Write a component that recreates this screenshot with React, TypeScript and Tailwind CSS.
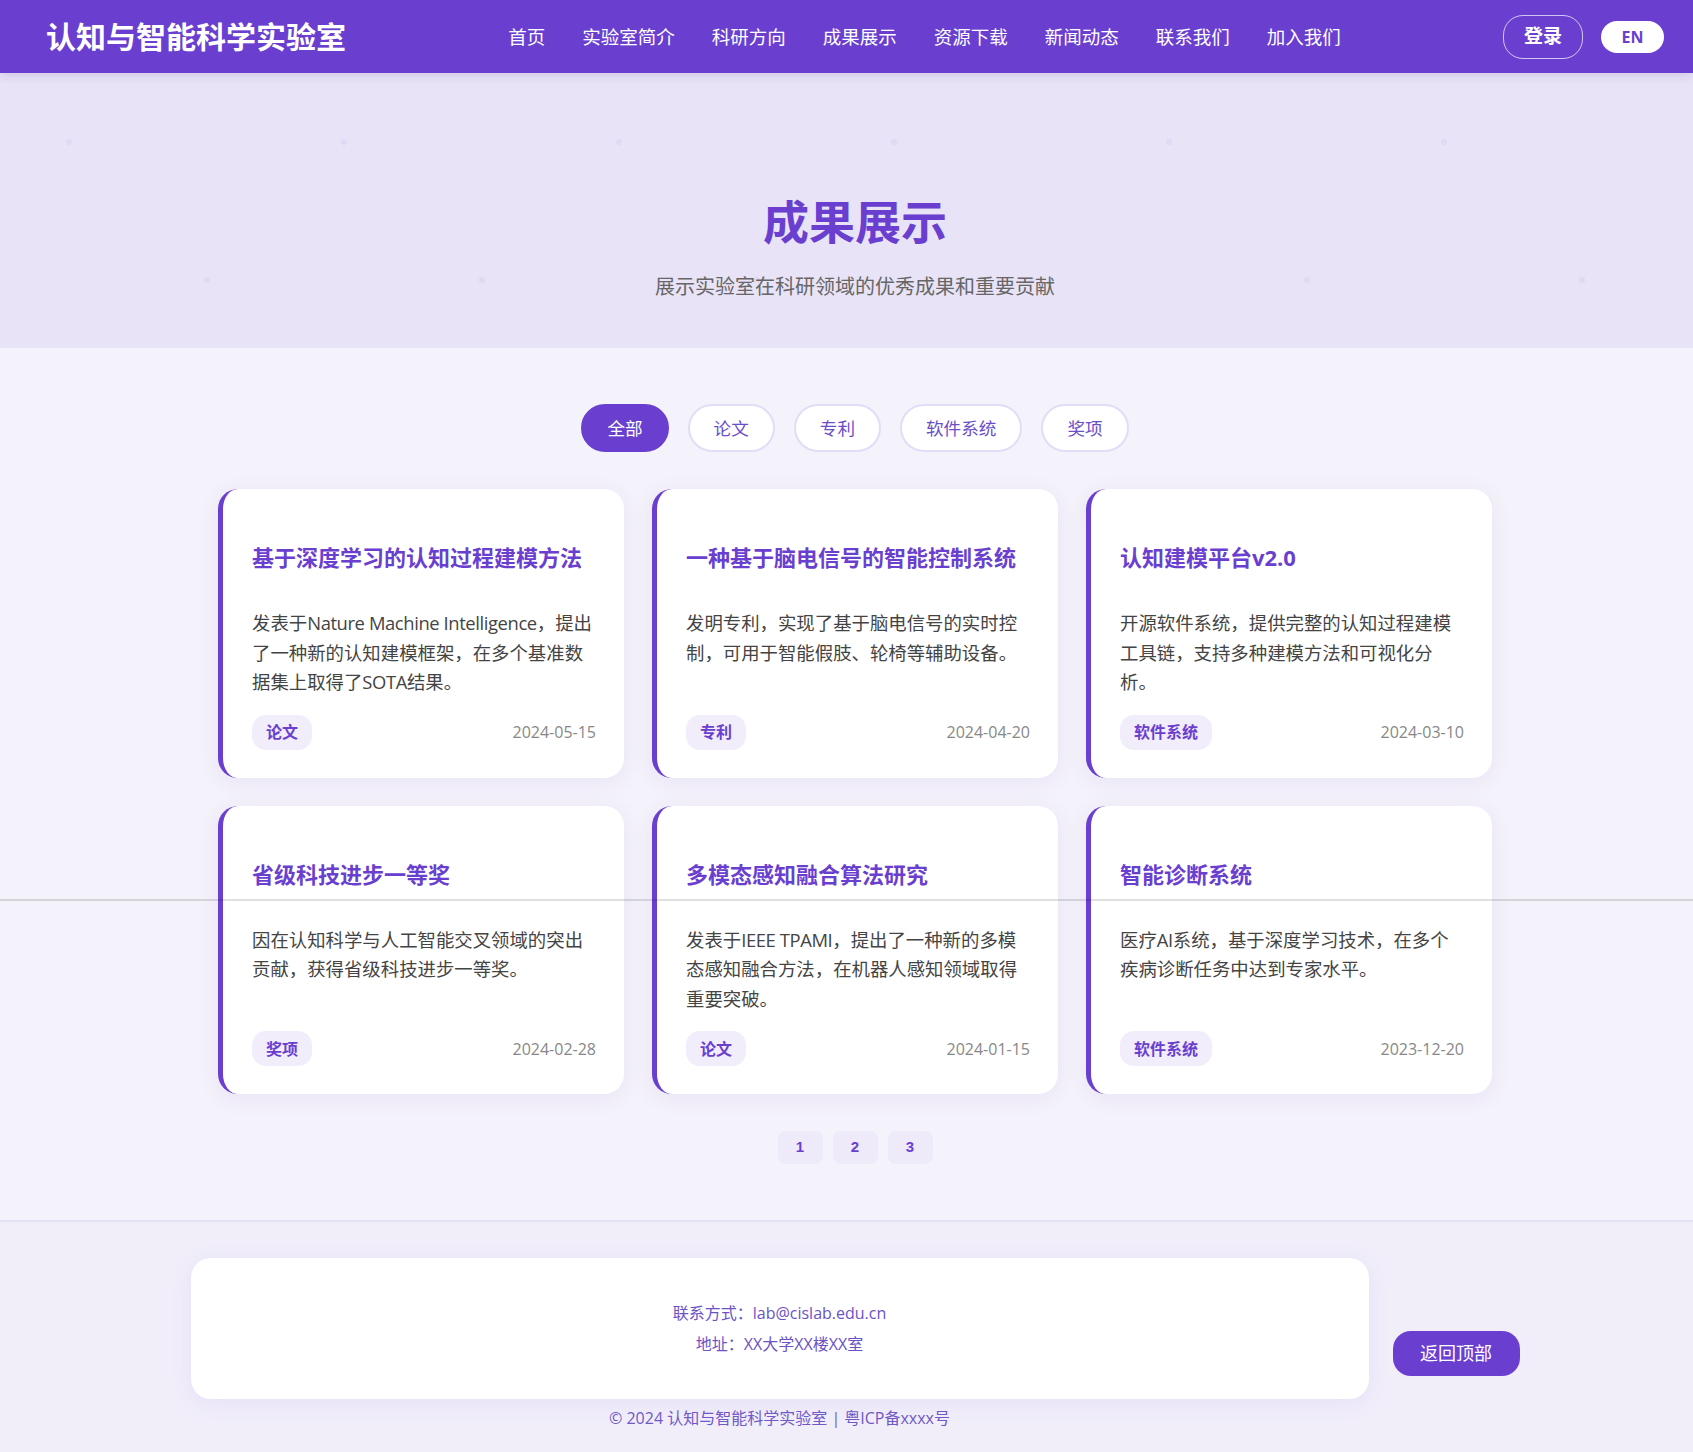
import React from "react";

const navItems = ["首页", "实验室简介", "科研方向", "成果展示", "资源下载", "新闻动态", "联系我们", "加入我们"];
const filters = ["全部", "论文", "专利", "软件系统", "奖项"];

type Card = { title: string; lines: string[]; tag: string; date: string };

const cards: Card[] = [
  {
    title: "基于深度学习的认知过程建模方法",
    lines: ["发表于Nature Machine Intelligence，提出", "了一种新的认知建模框架，在多个基准数", "据集上取得了SOTA结果。"],
    tag: "论文",
    date: "2024-05-15",
  },
  {
    title: "一种基于脑电信号的智能控制系统",
    lines: ["发明专利，实现了基于脑电信号的实时控", "制，可用于智能假肢、轮椅等辅助设备。"],
    tag: "专利",
    date: "2024-04-20",
  },
  {
    title: "认知建模平台v2.0",
    lines: ["开源软件系统，提供完整的认知过程建模", "工具链，支持多种建模方法和可视化分", "析。"],
    tag: "软件系统",
    date: "2024-03-10",
  },
  {
    title: "省级科技进步一等奖",
    lines: ["因在认知科学与人工智能交叉领域的突出", "贡献，获得省级科技进步一等奖。"],
    tag: "奖项",
    date: "2024-02-28",
  },
  {
    title: "多模态感知融合算法研究",
    lines: ["发表于IEEE TPAMI，提出了一种新的多模", "态感知融合方法，在机器人感知领域取得", "重要突破。"],
    tag: "论文",
    date: "2024-01-15",
  },
  {
    title: "智能诊断系统",
    lines: ["医疗AI系统，基于深度学习技术，在多个", "疾病诊断任务中达到专家水平。"],
    tag: "软件系统",
    date: "2023-12-20",
  },
];

function Line({ text }: { text: string }) {
  const parts = text.split(/([A-Za-z0-9.\s]+)/).filter((p) => p.length > 0);
  return (
    <span className="block whitespace-nowrap">
      {parts.map((p, i) =>
        /^[A-Za-z0-9.\s]+$/.test(p) ? (
          <span key={i} className="tracking-[-0.4px]">
            {p}
          </span>
        ) : (
          <span key={i}>{p}</span>
        )
      )}
    </span>
  );
}

export default function App() {
  return (
    <div className="relative min-h-screen bg-[#f4f2fa] font-['Open_Sans','Noto_Sans_CJK_SC',sans-serif]">
      {/* Navbar */}
      <header className="relative z-10 flex h-[73px] items-center justify-between bg-[#6a3fd0] pl-[46px] pr-[29px] shadow-[0_2px_10px_rgba(60,30,140,0.15)]">
        <div className="text-[30px] font-bold leading-none text-white">认知与智能科学实验室</div>
        <nav className="flex items-center gap-[37px] text-[18.5px] text-white">
          {navItems.map((n) => (
            <a key={n} className="leading-[28px]">
              {n}
            </a>
          ))}
        </nav>
        <div className="flex items-center gap-[18px]">
          <button className="h-[44px] w-[80px] rounded-[20px] border border-white/70 text-[19px] font-bold text-white">
            登录
          </button>
          <button className="h-[32px] w-[63px] rounded-full bg-white text-[16px] font-bold text-[#6a3fd0]">EN</button>
        </div>
      </header>

      {/* Hero */}
      <section className="flex h-[275px] flex-col items-center bg-[#e8e3f7] bg-[radial-gradient(circle_at_69px_69px,rgba(106,63,208,0.05)_3px,transparent_3.5px),radial-gradient(circle_at_207px_207px,rgba(106,63,208,0.05)_3px,transparent_3.5px)] bg-[length:275px_276px] pl-[17px] pt-[121px]">
        <h1 className="text-[46px] font-bold leading-[55px] text-[#6a3fd0]">成果展示</h1>
        <p className="mt-[22px] text-[20px] leading-[32px] text-[#666]">展示实验室在科研领域的优秀成果和重要贡献</p>
      </section>

      {/* Main */}
      <main className="bg-[#f4f2fa] pb-[56px] pl-[17px] pt-[56px]">
        <div className="flex justify-center gap-[19px]">
          {filters.map((f, i) => (
            <button
              key={f}
              className={
                i === 0
                  ? "h-[48px] rounded-full border-2 border-[#6a3fd0] bg-[#6a3fd0] px-[24px] text-[17.6px] text-white"
                  : "h-[48px] rounded-full border-2 border-[#e3dcf6] bg-white px-[24px] text-[17.6px] text-[#6a4fc8]"
              }
            >
              {f}
            </button>
          ))}
        </div>

        <div className="mx-auto mt-[37px] grid w-[1274px] grid-cols-3 gap-[28px]">
          {cards.map((c) => (
            <div
              key={c.title}
              className="flex flex-col rounded-[20px] border-l-[5px] border-l-[#6a3fd0] bg-white pb-[28px] pl-[29px] pr-[28px] pt-[53px] shadow-[0_4px_22px_rgba(106,63,208,0.08)]"
            >
              <h3 className="mb-[35px] text-[22px] font-bold leading-[31px] text-[#6a3fd0]">{c.title}</h3>
              <p className="mb-[18px] text-[18.4px] leading-[29.5px] text-[#444]">
                {c.lines.map((l) => (
                  <Line key={l} text={l} />
                ))}
              </p>
              <div className="mt-auto flex items-center justify-between">
                <span className="flex h-[35px] items-center rounded-[14px] bg-[#f1edfb] px-[14px] text-[16px] font-bold text-[#6a3fd0]">
                  {c.tag}
                </span>
                <span className="text-[16px] text-[#888]">{c.date}</span>
              </div>
            </div>
          ))}
        </div>

        <div className="mt-[37px] flex justify-center gap-[10px]">
          {["1", "2", "3"].map((p) => (
            <button
              key={p}
              className="h-[33px] w-[45px] rounded-[8px] bg-[#eeeaf9] font-['Liberation_Sans',sans-serif] text-[15px] font-bold text-[#6a3fd0]"
            >
              {p}
            </button>
          ))}
        </div>
      </main>

      {/* Footer */}
      <footer className="border-t-2 border-[#e6e0f5] bg-[#f1eefa] pb-[22px] pl-[17px] pt-[36px]">
        <div className="flex items-start justify-center gap-[24px]">
          <div className="flex w-[1178px] flex-col items-center">
            <div className="flex h-[141px] w-full flex-col items-center justify-center rounded-[20px] bg-white text-[16px] leading-[31px] text-[#6b52c6] shadow-[0_4px_22px_rgba(106,63,208,0.08)]">
              <p>联系方式：lab@cislab.edu.cn</p>
              <p>地址：XX大学XX楼XX室</p>
            </div>
            <p className="mt-[7px] text-[16px] leading-[24px] text-[#7059c6]">© 2024 认知与智能科学实验室 | 粤ICP备xxxx号</p>
          </div>
          <button className="mt-[73px] h-[45px] w-[127px] rounded-[18px] bg-[#6a3fd0] text-[18px] text-white">返回顶部</button>
        </div>
      </footer>

      {/* stray horizontal rule across page */}
      <div className="pointer-events-none absolute left-0 top-[899px] z-20 h-[2px] w-full bg-black/[0.12]" />
    </div>
  );
}
